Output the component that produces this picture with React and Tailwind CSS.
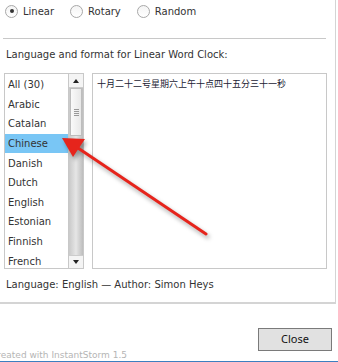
const LANGS = ['All (30)', 'Arabic', 'Catalan', 'Chinese', 'Danish', 'Dutch', 'English', 'Estonian', 'Finnish', 'French'];

function Radio({ checked, label }) {
  return (
    <label className="flex items-center gap-[5px]">
      <span className="w-[13px] h-[13px] rounded-full border border-[#a8a8a8] bg-gradient-to-b from-[#f4f4f4] to-white flex items-center justify-center">
        {checked && <span className="w-[4px] h-[4px] rounded-full bg-[#333]" />}
      </span>
      <span>{label}</span>
    </label>
  );
}

function Scrollbar() {
  return (
    <div className="w-[15px] flex flex-col border-l border-[#c8c8c8] bg-gradient-to-r from-[#c9c9c9] via-[#e6e6e6] to-[#bdbdbd]">
      <div className="h-[14px] bg-[#f4f4f4] border-b border-[#ccc] flex items-center justify-center">
        <span className="w-0 h-0 border-x-[3px] border-x-transparent border-b-[4px] border-b-[#222]" />
      </div>
      <div className="h-[48px] mx-[1px] bg-gradient-to-r from-[#fafafa] to-[#e8e8e8] border border-[#bdbdbd] flex flex-col items-center justify-center gap-[1px]">
        <span className="w-[5px] h-[1px] bg-[#999]" />
        <span className="w-[5px] h-[1px] bg-[#999]" />
        <span className="w-[5px] h-[1px] bg-[#999]" />
        <span className="w-[5px] h-[1px] bg-[#999]" />
      </div>
      <div className="flex-1" />
      <div className="h-[13px] bg-[#f4f4f4] border-t border-[#ccc] flex items-center justify-center">
        <span className="w-0 h-0 border-x-[3px] border-x-transparent border-t-[4px] border-t-[#222]" />
      </div>
    </div>
  );
}

export default function App() {
  return (
    <div className="relative w-[338px] h-[362px] bg-white overflow-hidden text-[#333] text-[10px]" style={{ fontFamily: '"DejaVu Sans", Verdana, sans-serif' }}>
      <div className="w-[336px] h-[304px] border-r border-b-2 border-[#d4d4d4] flex flex-col">
        <div className="flex items-center gap-[16px] pl-[5px] pt-[2px] h-[18px] box-content">
          <Radio checked label="Linear" />
          <Radio label="Rotary" />
          <Radio label="Random" />
        </div>
        <div className="mt-[18px] ml-[3px] w-[323px] h-[1px] bg-[#c8c8c8]" />
        <div className="ml-[6px] mt-[8px]">Language and format for Linear Word Clock:</div>
        <div className="flex gap-[8px] ml-[4px] mt-[11px] h-[196px]">
          <div className="w-[80px] border border-[#c8c8c8] flex overflow-hidden">
            <div className="flex-1 flex flex-col pt-[1px]">
              {LANGS.map((l) => (
                <div key={l} className={`h-[19.6px] shrink-0 pl-[3px] flex items-center ${l === 'Chinese' ? 'bg-[#79c6f5]' : ''}`}>{l}</div>
              ))}
            </div>
            <Scrollbar />
          </div>
          <div className="w-[235px] border border-[#c8c8c8] pl-[4px] pt-[5px] text-[9px] text-[#223] leading-none" style={{ fontFamily: '"Noto Sans CJK SC", sans-serif' }}>
            十月二十二号星期六上午十点四十五分三十一秒
          </div>
        </div>
        <div className="ml-[6px] mt-[8px]">Language: English — Author: Simon Heys</div>
      </div>
      <div className="flex justify-end pr-[6px] mt-[24px]">
        <button className="w-[74px] h-[23px] bg-[#e1e1e1] border border-[#7a7a7a] text-[11px] text-[#111]" style={{ fontFamily: '"Noto Sans", sans-serif' }}>Close</button>
      </div>
      <div className="absolute left-[-9px] top-[349px] text-[9px] text-[#b5b5b5]" style={{ fontFamily: '"DejaVu Sans", sans-serif' }}>Created with InstantStorm 1.5</div>
      <div className="absolute left-0 right-0 bottom-0 h-[1px] bg-[#3d7fc0]" />
      <svg className="absolute left-0 top-0 pointer-events-none" width="338" height="362" style={{ filter: 'drop-shadow(2px 3px 2px rgba(0,0,0,0.35))' }}>
        <line x1="206" y1="234" x2="72" y2="144" stroke="#e6241c" strokeWidth="3" strokeLinecap="round" />
        <polygon points="62,138 85,139 73,157" fill="#e6241c" />
      </svg>
    </div>
  );
}
